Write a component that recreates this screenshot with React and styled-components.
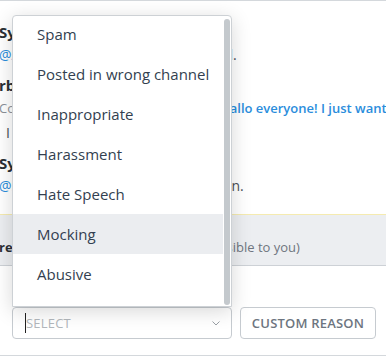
import React from 'react'
import styled, { createGlobalStyle } from 'styled-components'

const GlobalStyle = createGlobalStyle`
  html, body {
    margin: 0;
    padding: 0;
    background: #fff;
  }
  body {
    font-family: 'Open Sans', 'Noto Sans', sans-serif;
    overflow: hidden;
  }
  * {
    box-sizing: border-box;
  }
`

const Page = styled.div`
  width: 386px;
  height: 356px;
  display: flex;
  flex-direction: column;
  border-top: 1px solid #d4d8dc;
  border-bottom: 1px solid #d4d8dc;
  overflow: hidden;
  background: #fff;
`

const Feed = styled.div`
  display: flex;
  flex-direction: column;
  gap: 8px;
  padding: 20px 0 17px;
  margin-left: -1px;
`

const Message = styled.div`
  display: flex;
  flex-direction: column;
`

const Author = styled.div`
  font-size: 15px;
  font-weight: 700;
  line-height: 22px;
  color: #2a2f35;
  white-space: nowrap;
`

const Body = styled.div`
  margin-top: ${(p) => p.$gap || 1}px;
  padding-left: ${(p) => p.$indent || 0}px;
  font-size: 14px;
  line-height: 22px;
  color: #4b5057;
  white-space: nowrap;
`

const Mention = styled.span`
  color: #2a8ddc;
`

const Context = styled.div`
  margin-top: 1px;
  font-size: 13px;
  line-height: 22px;
  color: #8b9199;
  white-space: nowrap;
`

const Quote = styled.span`
  color: #2a8ddc;
  font-weight: 600;
`

const Notice = styled.div`
  background: #eceef1;
  border-top: 1px solid #f5ebb0;
  border-bottom: 1px solid #cdd1d6;
  padding: 21px 0 7px;
  margin-left: -1px;
  font-size: 13px;
  line-height: 22px;
  color: #6f7680;
  white-space: nowrap;
`

const NoticeStrong = styled.strong`
  font-weight: 700;
  color: #2a2f35;
`

const Footer = styled.div`
  display: flex;
  align-items: flex-start;
  gap: 8px;
  padding: 41px 0 16px 12px;
`

const SelectWrap = styled.div`
  position: relative;
  width: 220px;
`

const Menu = styled.div`
  position: absolute;
  left: 0;
  right: 0;
  bottom: 100%;
  height: 292px;
  background: #fff;
  border: 1px solid #cdd1d5;
  border-radius: 4px 4px 0 0;
  box-shadow: 0 4px 20px rgba(0, 0, 0, 0.16);
  overflow: hidden;
  z-index: 2;
`

const MenuList = styled.ul`
  list-style: none;
  margin: -2px 0 0;
  padding: 0 8px 12px 0;
`

const MenuItem = styled.li`
  height: 40px;
  display: flex;
  align-items: center;
  padding-left: 24px;
  font-size: 15px;
  color: #333f50;
  background: ${(p) => (p.$active ? '#ebedf0' : 'transparent')};
`

const Thumb = styled.div`
  position: absolute;
  top: 3px;
  bottom: 1px;
  right: 1px;
  width: 6px;
  border-radius: 3px;
  background: #c4c9cd;
`

const SelectBox = styled.div`
  height: 32px;
  display: flex;
  align-items: center;
  padding: 0 11px 0 12px;
  border: 1px solid #c6cbd0;
  border-radius: 4px;
  background: #fff;
`

const Caret = styled.span`
  width: 1px;
  height: 20px;
  background: #222;
`

const Placeholder = styled.span`
  font-size: 13px;
  letter-spacing: 0.2px;
  color: #b2b7bc;
  text-transform: uppercase;
`

const Chevron = styled.svg`
  margin-left: auto;
  display: block;
`

const ReasonButton = styled.button`
  width: 136px;
  height: 32px;
  border: 1px solid #c6cbd0;
  border-radius: 4px;
  background: #fff;
  font-family: inherit;
  font-size: 13px;
  font-weight: 600;
  letter-spacing: 0.2px;
  color: #6d7580;
  text-transform: uppercase;
  padding: 0;
`

const reasons = [
  'Spam',
  'Posted in wrong channel',
  'Inappropriate',
  'Harassment',
  'Hate Speech',
  'Mocking',
  'Abusive',
]

export default function App() {
  return (
    <>
      <GlobalStyle />
      <Page>
        <Feed>
          <Message>
            <Author>Sysbot</Author>
            <Body>
              <Mention>@Andrea</Mention> was muted in this channel.
            </Body>
          </Message>
          <Message>
            <Author>rb-moderator</Author>
            <Context>
              Commented on a message in #chat: <Quote>Hallo everyone! I just wanted to say hi</Quote>
            </Context>
            <Body $gap={3} $indent={7}>
              I agree.
            </Body>
          </Message>
          <Message>
            <Author>Sysbot</Author>
            <Body>
              <Mention>@Sue</Mention> was muted in the conversation.
            </Body>
          </Message>
        </Feed>
        <Notice>
          <NoticeStrong>reporting</NoticeStrong> Choose one reason (only visible to you)
        </Notice>
        <Footer>
          <SelectWrap>
            <Menu>
              <MenuList>
                {reasons.map((r) => (
                  <MenuItem key={r} $active={r === 'Mocking'}>
                    {r}
                  </MenuItem>
                ))}
              </MenuList>
              <Thumb />
            </Menu>
            <SelectBox>
              <Caret />
              <Placeholder>Select</Placeholder>
              <Chevron width="8" height="5" viewBox="0 0 8 5">
                <path d="M0.5 0.5 L4 4 L7.5 0.5" fill="none" stroke="#9aa0a6" strokeWidth="1" />
              </Chevron>
            </SelectBox>
          </SelectWrap>
          <ReasonButton>Custom reason</ReasonButton>
        </Footer>
      </Page>
    </>
  )
}
